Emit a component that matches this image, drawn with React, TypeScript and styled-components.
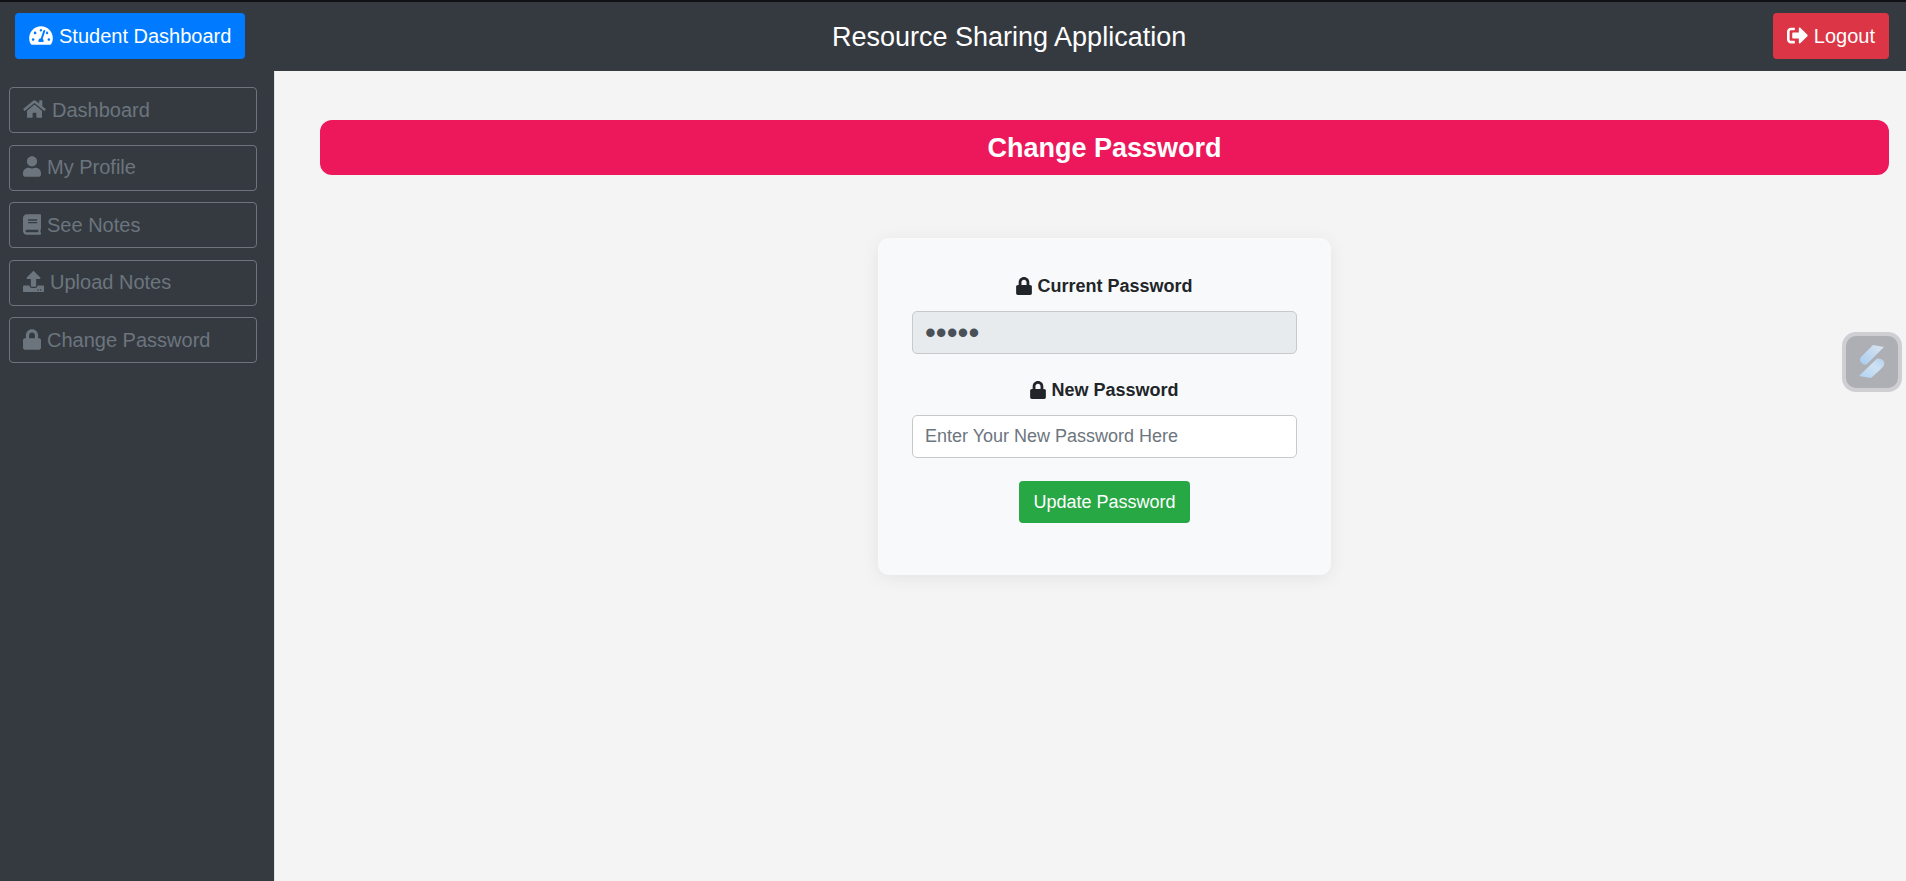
import React, { useState } from "react";
import styled, { createGlobalStyle } from "styled-components";
import {
  FaBook,
  FaHome,
  FaLock,
  FaSignOutAlt,
  FaTachometerAlt,
  FaUpload,
  FaUser,
} from "react-icons/fa";

const GlobalStyle = createGlobalStyle`
  *, *::before, *::after { box-sizing: border-box; }
  body {
    margin: 0;
    background: #f4f4f4;
    color: #212529;
    font-family: "Liberation Sans", Arial, sans-serif;
    font-size: 18px;
    line-height: 27px;
  }
  button, input { font: inherit; }
`;

const Page = styled.div`
  display: flex;
  flex-direction: column;
  min-height: 100vh;
`;

const Header = styled.header`
  display: flex;
  align-items: center;
  justify-content: space-between;
  padding: 11px 17px 12px 15px;
  border-top: 2px solid #0f1013;
  background: #353a41;
`;

const AppTitle = styled.h1`
  margin: 0;
  padding-top: 2px;
  color: #fff;
  font-size: 27px;
  font-weight: 400;
  line-height: 32px;
`;

const Glyph = styled.span<{ $width: number; $height: number }>`
  display: flex;
  flex: none;
  margin-bottom: 2px;

  svg {
    width: ${(p) => p.$width}px;
    height: ${(p) => p.$height}px;
  }
`;

const Button = styled.button<{ $color: string; $large?: boolean }>`
  display: inline-flex;
  align-items: center;
  gap: 6px;
  height: ${(p) => (p.$large ? 46 : 42)}px;
  padding: 0 14px;
  border: 0;
  border-radius: 4px;
  background: ${(p) => p.$color};
  color: #fff;
  font-size: ${(p) => (p.$large ? 20 : 18)}px;
  white-space: nowrap;
  cursor: pointer;
`;

const Body = styled.div`
  display: flex;
  flex: 1;
`;

const Sidebar = styled.aside`
  flex: none;
  width: 275px;
  padding: 16px 17px 16px 9px;
  border-right: 1px solid #dfe0e2;
  background: #353a41;
`;

const NavList = styled.nav`
  display: flex;
  flex-direction: column;
  justify-content: space-between;
  height: 276px;
`;

const NavItem = styled.a`
  display: flex;
  align-items: center;
  gap: 6px;
  height: 46px;
  padding: 0 13px;
  border: 1px solid #6c757d;
  border-radius: 4px;
  color: #6c757d;
  font-size: 20px;
  text-decoration: none;
`;

const Main = styled.main`
  flex: 1;
  min-width: 0;
  padding: 49px 17px 49px 45px;
`;

const Banner = styled.h2`
  margin: 0 0 63px;
  padding: 12px 12px 10px;
  border-radius: 12px;
  background: #ec185b;
  color: #fff;
  font-size: 27px;
  line-height: 33px;
  text-align: center;
`;

const Card = styled.form`
  display: flex;
  flex-direction: column;
  align-items: center;
  width: 453px;
  max-width: 100%;
  margin: 0 auto;
  padding: 35px 34px 52px;
  border-radius: 11px;
  background: #f8f9fb;
  box-shadow: 0 3px 18px rgba(0, 0, 0, 0.07);
`;

const Field = styled.div`
  display: flex;
  flex-direction: column;
  align-items: center;
  gap: 11px;
  width: 100%;
  margin-bottom: 23px;
`;

const Label = styled.label`
  display: flex;
  align-items: center;
  gap: 5px;
  font-weight: 700;
`;

const PasswordInput = styled.input`
  width: 100%;
  height: 43px;
  padding: 0 12px;
  border: 1px solid #c8c9ca;
  border-radius: 5px;
  background: #fff;
  color: #495057;

  &:disabled {
    background: #e7ebee;
  }
  &:not(:placeholder-shown) {
    font-size: 31px;
  }
  &::placeholder {
    color: #6c757d;
    opacity: 1;
  }
`;

const FloatingButton = styled.button`
  position: fixed;
  top: 332px;
  right: 4px;
  display: flex;
  align-items: center;
  justify-content: center;
  width: 60px;
  height: 60px;
  padding: 0;
  border: 4px solid #cfcfd3;
  border-radius: 14px;
  background: #aeafb4;
  cursor: pointer;
`;

const links = [
  { label: "Dashboard", Icon: FaHome, width: 23, height: 20 },
  { label: "My Profile", Icon: FaUser, width: 18, height: 21 },
  { label: "See Notes", Icon: FaBook, width: 18, height: 21 },
  { label: "Upload Notes", Icon: FaUpload, width: 21, height: 21 },
  { label: "Change Password", Icon: FaLock, width: 18, height: 21 },
];

const SwiftMark = () => (
  <svg width="26" height="34" viewBox="0 0 26 34" aria-hidden="true">
    <defs>
      <linearGradient id="upper" x1="1" y1="0" x2="0" y2="1">
        <stop offset="0" stopColor="#dbe5ef" />
        <stop offset="1" stopColor="#a9cdf1" />
      </linearGradient>
      <linearGradient id="lower" x1="1" y1="0" x2="0" y2="1">
        <stop offset="0" stopColor="#b4d0ec" />
        <stop offset="0.4" stopColor="#cfe2f4" />
        <stop offset="1" stopColor="#b0d1f1" />
      </linearGradient>
    </defs>
    <path d="M14 0 L25 2 L8 19 Q6 20 4 19 Q-1 16 2 12 Z" fill="url(#upper)" />
    <path d="M18 13.500 Q21 13 24 15 Q27 19 23 23 L12 33 L0 31 Z" fill="url(#lower)" />
  </svg>
);

export default function App() {
  const [password, setPassword] = useState("");

  return (
    <>
      <GlobalStyle />
      <Page>
        <Header>
          <Button $color="#007bff" $large type="button">
            <Glyph $width={24} $height={21}>
              <FaTachometerAlt />
            </Glyph>
            Student Dashboard
          </Button>
          <AppTitle>Resource Sharing Application</AppTitle>
          <Button $color="#dc3545" $large type="button">
            <Glyph $width={21} $height={21}>
              <FaSignOutAlt />
            </Glyph>
            Logout
          </Button>
        </Header>
        <Body>
          <Sidebar>
            <NavList>
              {links.map(({ label, Icon, width, height }) => (
                <NavItem key={label} href="#">
                  <Glyph $width={width} $height={height}>
                    <Icon />
                  </Glyph>
                  {label}
                </NavItem>
              ))}
            </NavList>
          </Sidebar>
          <Main>
            <Banner>Change Password</Banner>
            <Card onSubmit={(e) => e.preventDefault()}>
              <Field>
                <Label htmlFor="current">
                  <Glyph $width={16} $height={18}>
                    <FaLock />
                  </Glyph>
                  Current Password
                </Label>
                <PasswordInput id="current" type="password" value="admin" disabled readOnly />
              </Field>
              <Field>
                <Label htmlFor="next">
                  <Glyph $width={16} $height={18}>
                    <FaLock />
                  </Glyph>
                  New Password
                </Label>
                <PasswordInput
                  id="next"
                  type="password"
                  placeholder="Enter Your New Password Here"
                  value={password}
                  onChange={(e) => setPassword(e.target.value)}
                />
              </Field>
              <Button $color="#28a745" type="submit">
                Update Password
              </Button>
            </Card>
          </Main>
        </Body>
        <FloatingButton type="button" aria-label="Open assistant">
          <SwiftMark />
        </FloatingButton>
      </Page>
    </>
  );
}
